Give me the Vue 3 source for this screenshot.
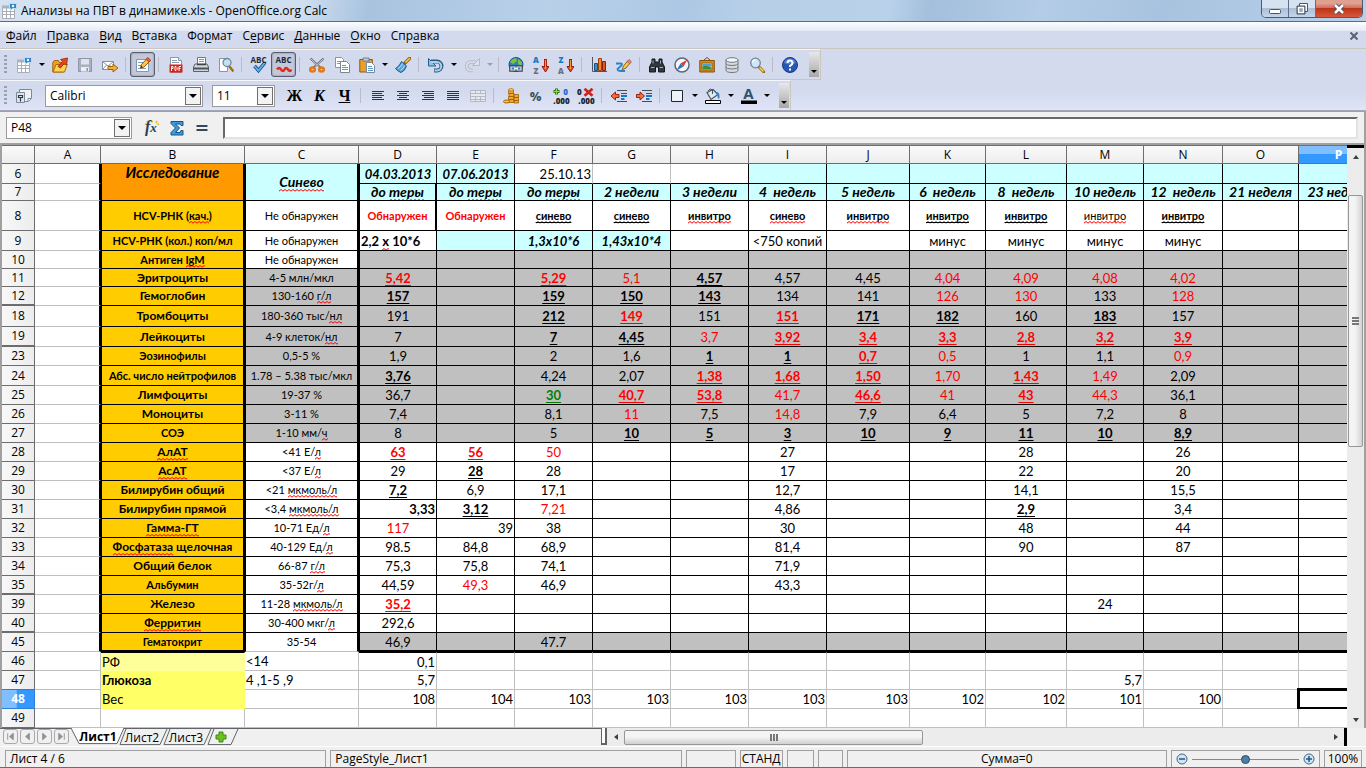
<script setup>
import { ref } from 'vue'

const menus = [
  ['', 'Ф', 'айл'], ['', 'П', 'равка'], ['', 'В', 'ид'], ['В', 'с', 'тавка'], ['Фо', 'р', 'мат'],
  ['С', 'е', 'рвис'], ['', 'Д', 'анные'], ['', 'О', 'кно'], ['Спр', 'а', 'вка'],
]

const lines = (xs) => xs.map(([a, b], i) => `<path d="M${a} ${3.5 + i * 2}H${b}" stroke="#2b3640"/>`).join('')
const lens = '<path d="M10 10l5 5" stroke="#9a6a12" stroke-width="3" stroke-linecap="round"/><path d="M10.500 10.500l4 4" stroke="#ffd35a" stroke-width="1.400"/><circle cx="6.500" cy="6" r="4.800" fill="#cfe6f7" stroke="#6f8699" stroke-width="1.300"/><path d="M3.500 5.500a3.200 3.200 0 0 1 3-2.500" stroke="#fff" fill="none" stroke-width="1.300"/>'
const arrowDown = '<path d="M12.500 2v9" stroke="#a3180c" stroke-width="3"/><path d="M9 9.500h7l-3.500 5.500z" fill="#e8502e" stroke="#a3180c"/><path d="M12.500 3v9" stroke="#f49a3c" stroke-width="1.200"/>'
const indentLines = '<path d="M6 2.500h10M10 5.500h6M6 13.500h10" stroke="#444c55"/><path d="M10 8h6M10 11h3.500" stroke="#1878c0" stroke-width="2"/>'

const icons = {
  doc: '<path d="M1.500 3.500h9v-0h3v12h-12z" fill="#fff" stroke="#a9adb5"/><path d="M1 5.500h13v-3h-13z" fill="#a8b4c4"/><path d="M2 8.500h12M2 11.500h12M5.500 3v12M9.500 3v12" stroke="#a9adb5"/><path d="M8.500.5h7v5h-4l-2 2v-2h-1z" fill="#2f86c8" stroke="#bcdcf2"/><circle cx="12" cy="3" r="1.200" fill="#fff"/>',
  open: '<path d="M.8 15V5.500l1.500-2h4l1.200 2h4V15z" fill="#eea023" stroke="#a0640a"/><path d="M1 15l3-7.500h11.300L12.500 15z" fill="#ffd44e" stroke="#a86a0a"/><path d="M6 9.500l4.500-5-2-2 7-1.500-1 7-2-2-4 5z" fill="#e64a25" stroke="#9c1c0c" stroke-width=".8"/>',
  save: '<path d="M1.500 1.500h13v13h-13z" fill="#a9b0bf" stroke="#8d95a6"/><path d="M4 2h8v5.500H4z" fill="#dfe3ec"/><path d="M4 10h8v4.500H4z" fill="#eceef4"/><path d="M9.500 11h1.500v3H9.500z" fill="#8d95a6"/>',
  mail: '<path d="M.5 4.500h11v8H.5z" fill="#fff" stroke="#8793a1"/><path d="M.5 4.500l5.500 4.500 5.500-4.500M.5 12.500l4-4.500M11.500 12.500l-4-4.500" fill="none" stroke="#8793a1"/><path d="M6 9.500h5v-2.500l5 4-5 4v-2.500H6z" fill="#f6ae35" stroke="#98650f"/>',
  edit: '<path d="M1.500 2.500h12v12h-12z" fill="#fff" stroke="#7f99b2"/><path d="M3 5.500h6M3 8.500h4M3 11.500h8" stroke="#7f9dbb"/><path d="M5.500 11l1-3.500 6-6.500 3 2.500-6.500 6.500z" fill="#fbc944" stroke="#965a10"/><path d="M11 2.500l3 2.500 1.800-1.800-3-2.700z" fill="#e4624b" stroke="#9b3222" stroke-width=".7"/><path d="M5.500 11l.8-2.200 1.500 1.400z" fill="#222"/>',
  pdf: '<path d="M2.500.5h8l3 3v12h-11z" fill="#fff" stroke="#8d99a6"/><path d="M10.500.5v3h3" fill="#dbe5ee" stroke="#8d99a6"/><path d="M4 3.500h5M4 5.500h7" stroke="#8aa0b5"/><path d="M1.500 7.500h13v8h-13z" fill="#d91f1a"/><path d="M3.500 14V9.500h1.500v2H3.500M7 9.500v4h1l1-1v-2l-1-1zM11 14V9.500h2M11 11.500h1.500" fill="none" stroke="#fff"/>',
  print: '<path d="M4.500.5h8v7h-8z" fill="#fff" stroke="#6b7884"/><path d="M6 2.500h5M6 4.500h5" stroke="#6a99c4"/><path d="M2 7h12l1.500 3v4.500H.5V10z" fill="#d4d6d8" stroke="#59626b"/><path d="M.5 10.500h15v2H.5z" fill="#4b545d"/><path d="M4 7.500h9" stroke="#3b444c" stroke-width="1.500"/>',
  preview: '<path d="M1.500 1.500h8v13h-8z" fill="#fff" stroke="#8a96a3"/><path d="M11 9l4.500 5.500" stroke="#a36d10" stroke-width="2.500"/><circle cx="9" cy="5.500" r="4" fill="#c3e0f4" stroke="#71879a" stroke-width="1.300"/>',
  spell: '<path d="M3.500 9l4 4.500 6.500-8" fill="none" stroke="#0f4d86" stroke-width="3.500"/><path d="M3.500 9l4 4.500 6.500-8" fill="none" stroke="#61b5ec" stroke-width="1.800"/>',
  auto: '<path d="M1 12.500q2-3 4 0t3.500 0 3.500 0 3 0" fill="none" stroke="#e22a1c" stroke-width="2.500"/>',
  cut: '<path d="M1.500 1.500l11 10M14.500 1.500l-11 10" stroke="#6a6f75" stroke-width="2.200"/><path d="M2 2l8 7.500M14 2l-8 7.500" stroke="#d9dcdf" stroke-width=".8"/><ellipse cx="3.500" cy="12.500" rx="2.300" ry="2" fill="none" stroke="#e37817" stroke-width="2.500"/><ellipse cx="12.500" cy="12.500" rx="2.300" ry="2" fill="none" stroke="#e37817" stroke-width="2.500"/>',
  copy: '<path d="M1.500.5h6l2 2v8h-8z" fill="#fff" stroke="#8795a3"/><path d="M3 4.500h5M3 6.500h5" stroke="#6a9fca"/><path d="M6.500 4.500h6l3 3v8h-9z" fill="#fff" stroke="#788796"/><path d="M8 8.500h4M8 10.500h6M8 12.500h6" stroke="#5f98c7"/>',
  paste: '<path d="M.8 2.500h12.500V15H.8z" fill="#e9a02b" stroke="#8e5a0b"/><path d="M4 1h6v3H4z" fill="#c5cbd1" stroke="#66707a" stroke-width=".8"/><path d="M7.500 5.500h5l3 3v7h-8z" fill="#fff" stroke="#7b8a99"/><path d="M9 9.500h4M9 11.500h5M9 13.500h5" stroke="#5f98c7"/>',
  brush: '<path d="M10 6l5-5" stroke="#9a640d" stroke-width="3.400" stroke-linecap="round"/><path d="M10.500 5.500l4.300-4.300" stroke="#f9c957" stroke-width="1.600"/><path d="M6.500 4.500l5 4.500q-1.500 5-5.500 6.500Q3 14.500.5 11.500q4-2 6-7z" fill="#58a5dd" stroke="#20588c"/><path d="M3 11.500q3-1.500 4.500-5M5.500 13.500q3-2 4-5" stroke="#b9dcf5" fill="none"/>',
  undo: '<path d="M3 4.500h6a4.500 4.500 0 0 1 0 9H6" fill="none" stroke="#285c86" stroke-width="4"/><path d="M.5 1.500v7.500h7.500z" fill="#8fc3e2" stroke="#285c86"/><path d="M3 5h6a4 4 0 0 1 0 8.500H6.500" fill="none" stroke="#a9d3ea" stroke-width="2"/>',
  redo: '<path d="M12.500 5h-6a4.300 4.300 0 0 0 0 8.500H9" fill="none" stroke="#b4b9c6" stroke-width="3.500"/><path d="M12.500 5h-6a4.300 4.300 0 0 0 0 8.500H9" fill="none" stroke="#dee1eb" stroke-width="1.600"/><path d="M15.500 1.500v7H8.500z" fill="#dee1eb" stroke="#b4b9c6"/>',
  link: '<circle cx="8" cy="7.500" r="7" fill="#2e7fc1" stroke="#1d527f"/><path d="M2 5q2-3.500 6-4l1 3-4 3zM10 2l4 3v4l-4-2z" fill="#7cc142"/><path d="M2.500 9.500h5v4h-5zM8.500 9.500h5v4h-5z" fill="none" stroke="#38444f" stroke-width="2.600"/><path d="M3 10h4v3H3zM9 10h4v3H9zM6 11.500h4" fill="none" stroke="#eef1f3" stroke-width="1.200"/>',
  sortAZ: arrowDown, sortZA: arrowDown,
  chart: '<path d="M1.500 0v14.500H16" fill="none" stroke="#4d5660"/><path d="M3.500 6.500h3v7h-3z" fill="#3d8fd0" stroke="#1a4f80"/><path d="M7.500 1.500h3v12h-3z" fill="#f08a24" stroke="#a04208"/><path d="M11.500 4.500h3v9h-3z" fill="#e2532a" stroke="#8d2009"/>',
  draw: '<path d="M0 6.500h4.500q2.500 0 1 2L1.500 12q0 2 3.500 2h4" fill="none" stroke="#2384d0" stroke-width="1.800"/><path d="M6 13l1.500-4L12 3.500l2.500 2L10 11z" fill="#fbc944" stroke="#9a6010"/><path d="M11 4.500l2.500 2.300 2-2-2.500-2.300z" fill="#e78d80" stroke="#a04a3a" stroke-width=".7"/>',
  find: '<path d="M3 2h3v3h4V2h3v3l2.500 5v5h-6v-5h-3v5h-6v-5L3 5z" fill="#30373d" stroke="#14181b"/><path d="M2 10.500h3.500M10.500 10.500H14M4 3.500v3M11.500 3.500v3" stroke="#a9b2ba"/>',
  nav: '<circle cx="8" cy="8" r="7" fill="#f5f8fb" stroke="#5b6875" stroke-width="1.500"/><path d="M13.500 2.500L9.500 9.500 6.500 6.500z" fill="#e3392c"/><path d="M2.500 13.500L6.500 6.500l3 3z" fill="#2c72c4"/>',
  gallery: '<path d="M5 3L8 .5 11 3" fill="none" stroke="#6b4a18"/><path d="M.8 3.500h14.500v11.500H.8z" fill="#d98a1d" stroke="#874f08"/><path d="M3 6h10v7H3z" fill="#fde9a8" stroke="#874f08" stroke-width=".7"/><path d="M3.500 6.500h9v3h-9z" fill="#4aa3de"/><path d="M3.500 9.500q4-2 9 1v2h-9z" fill="#3f8d3a"/>',
  db: '<path d="M2 3v10q0 2.500 6 2.500t6-2.500V3z" fill="#d6dadd" stroke="#6f7880"/><ellipse cx="8" cy="3" rx="6" ry="2.300" fill="#f5f6f7" stroke="#6f7880"/><path d="M2 6.500q0 2 6 2t6-2M2 10q0 2 6 2t6-2" fill="none" stroke="#6f7880"/>',
  zoom: lens,
  help: '<circle cx="8" cy="8" r="7.500" fill="#2757b4" stroke="#183a80"/><path d="M2 6a6.300 6.300 0 0 1 12 0q-6 3-12 0z" fill="#6f97dd" opacity=".6"/><path d="M5.500 6q0-2.500 2.500-2.500T10.500 6q0 1.500-2.500 3v1" fill="none" stroke="#fff" stroke-width="2"/><path d="M7 11.500h2v2H7z" fill="#fff"/>',
  styles: '<path d="M3.500 1.500h12v9l-3 3h-9z" fill="#eef1f6" stroke="#7d8998"/><path d="M15 10.500h-3v3" fill="#fff" stroke="#7d8998"/><path d="M.5 4.500h8v10h-8z" fill="#dfe4ec" stroke="#7d8998"/><path d="M2.500 7.500h4v2h-4zM4.500 9.500v4" fill="none" stroke="#303b47" stroke-width="1.200"/>',
  left: lines([[2, 14], [2, 12], [2, 14], [2, 12], [2, 14]]),
  center: lines([[2, 14], [4, 12], [2, 14], [4, 12], [2, 14]]),
  right: lines([[2, 14], [4, 14], [2, 14], [4, 14], [2, 14]]),
  justify: lines([[2, 14], [2, 14], [2, 14], [2, 14], [2, 14]]),
  merge: '<path d="M.5 2.500h15v11H.5zM.5 5.500h15M.5 8.500h15M.5 11.500h15M5.500 2.500v3M10.500 2.500v3M5.500 8.500v5M10.500 8.500v5" fill="#e7e9f0" stroke="#b4b8c4"/>',
  money: '<path d="M5.500 2.500h5v3h-5zM6 5.500h5v3H6zM5.500 8.500h5v3h-5zM6 11.500h5v3H6zM11 6.500h4.500v3H11zM11 9.500h4.500v3H11zM11 12.500h4.500v2.500H11z" fill="#f3a92d" stroke="#a15f0a" stroke-width=".8"/><ellipse cx="8" cy="1.800" rx="2.500" ry="1.200" fill="#ffd970" stroke="#a15f0a" stroke-width=".7"/><ellipse cx="3.500" cy="13.500" rx="3" ry="1.500" fill="#f9bf4c" stroke="#a15f0a"/>',
  addDec: '<path d="M3.500 .5v6M.5 3.500h6" stroke="#2b7a10" stroke-width="3"/><path d="M3.500 1v5M1 3.500h5" stroke="#8ddd4c" stroke-width="1.200"/>',
  delDec: '<path d="M6.500 .8l8 7M14.500 .8l-8 7" stroke="#d4201a" stroke-width="2.800"/>',
  outdent: indentLines + '<path d="M0 8l4.500-4v2.500H8v3H4.500V12z" fill="#f07040" stroke="#98200c"/>',
  indent: indentLines + '<path d="M8.500 8L4 4v2.500H.5v3H4V12z" fill="#f07040" stroke="#98200c"/>',
  border: '<path d="M2.500 2.500h11v11h-11z" fill="#edf1f8" stroke="#20272e"/>',
  fill: '<path d="M2 4.500l6-3 5 5-7 5z" fill="#dfe7ee" stroke="#47535e" stroke-width="1.200"/><path d="M3 3q2-3.500 4.500-1v4" fill="none" stroke="#47535e"/><path d="M11 4q4-1 3.500 6-.5 1.500-1.500 0l-1-3z" fill="#2f87c9"/><path d="M.5 12.500h15v3H.5z" fill="#fff" stroke="#000"/>',
  color: '<path d="M0 12.500h16v3.500H0z" fill="#000"/>',
  fx: '<path d="M3 1l1 2M8 .5v2M13 1l-1 2M1 4l2 .5M15 4l-2 .5" stroke="#f4bc20" stroke-width="1.800"/>',
  sum: '<path d="M2 1.500h12v4h-2l-1-1.500H6.500l4 4-4 4.500H11l1-2h2v4.500H2v-2.500l4.500-4.500L2 3.500z" fill="#3f9ad8" stroke="#15548a"/>',
  eq: '<path d="M2.500 6h11M2.500 10h11" stroke="#33485c" stroke-width="2"/>',
}

const B = (icon, label, extra = {}) => ({ icon, label, ...extra })
const sep = { sep: true }
const bar1 = [
  B('doc', 'Создать', { menu: true }), B('open', 'Открыть'), B('save', 'Сохранить'), B('mail', 'Письмо'), sep,
  B('edit', 'Правка файла', { on: true }), sep, B('pdf', 'Экспорт в PDF'), B('print', 'Печать'), B('preview', 'Просмотр'), sep,
  B('spell', 'Орфография', { abc: true }), B('auto', 'Автопроверка', { abc: true, on: true }), sep,
  B('cut', 'Вырезать'), B('copy', 'Копировать'), B('paste', 'Вставить', { menu: true }), B('brush', 'Кисть'), sep,
  B('undo', 'Отменить', { menu: true }), B('redo', 'Вернуть', { menu: true, dim: true }), sep,
  B('link', 'Гиперссылка'), B('sortAZ', 'По возрастанию', { letters: ['A', 'Z'] }), B('sortZA', 'По убыванию', { letters: ['Z', 'A'] }), sep,
  B('chart', 'Диаграмма'), B('draw', 'Рисование'), sep,
  B('find', 'Найти'), B('nav', 'Навигатор'), B('gallery', 'Галерея'), B('db', 'Источники'), B('zoom', 'Масштаб'), sep, B('help', 'Помощь'),
]
const bar2 = [
  B('', 'Полужирный', { text: 'Ж' }), B('', 'Курсив', { text: 'К', tcls: 'it' }), B('', 'Подчёркнутый', { text: 'Ч', tcls: 'ul' }), sep,
  B('left', 'Влево'), B('center', 'По центру'), B('right', 'Вправо'), B('justify', 'По ширине'), B('merge', 'Объединить'), sep,
  B('money', 'Валюта'), B('', 'Процент', { text: '%', tcls: 'pct' }), B('addDec', 'Добавить разряд', { dec: '0' }), B('delDec', 'Удалить разряд', { dec: '' }), sep,
  B('outdent', 'Уменьшить отступ'), B('indent', 'Увеличить отступ'), sep,
  B('border', 'Обрамление', { menu: true }), B('fill', 'Цвет фона', { menu: true }), B('color', 'Цвет шрифта', { menu: true, bigA: true }),
]

const cols = [
  ['A', 66], ['B', 144], ['C', 114], ['D', 78], ['E', 78], ['F', 78], ['G', 78], ['H', 78], ['I', 78],
  ['J', 83], ['K', 76], ['L', 81], ['M', 77], ['N', 79], ['O', 76], ['P', 80],
]
const letters = 'DEFGHIJKLMNOP'.split('')

// Cell notation: "text|flags"; b bold, i italic, u underline, r red, g green, R right, L left, s small, c cyan.
// Words between tildes are marked by the spell checker.
const raw = [
  [6, 20, '', '', ['04.03.2013|bic', '07.06.2013|bic', '25.10.13|R', '', '', '|c', '|c', '|c', '|c', '|c', '|c', '|c', '|c']],
  [7, 17, '', '', ['до ~теры~', 'до ~теры~', 'до ~теры~', '2 недели', '3 недели', '4  недель', '5 недель', '6  недель', '8  недель', '10 недель', '12  недель', '21 неделя', '23 недель'].map((t) => t + '|bich')],
  [8, 30, 'HCV-РНК (~кач.~)', 'Не обнаружен', ['Обнаружен|brs', 'Обнаружен|brs', '~синево~|bus', '~синево~|bus', '~инвитро~|bs', '~синево~|bs', '~инвитро~|bs', '~инвитро~|bus', '~инвитро~|bus', '~инвитро~|s', '~инвитро~|bus']],
  [9, 20, 'HCV-РНК (кол.) коп/мл', 'Не обнаружен', ['2,2 ~х~ 10*6|bL', '|c', '1,3х10*6|bic', '1,43х10*4|bic', '', '<750 копий', '', 'минус', 'минус', 'минус', 'минус']],
  [10, 18, 'Антиген ~IgM~', 'Не обнаружен', []],
  [11, 18, 'Эритроциты', '4-5 млн/мкл', ['5,42|bru', '', '5,29|bru', '5,1|r', '4,57|bu', '4,57', '4,45', '4,04|r', '4,09|r', '4,08|r', '4,02|r']],
  [12, 19, 'Гемоглобин', '130-160 ~г/л~', ['157|bu', '', '159|bu', '150|bu', '143|bu', '134', '141', '126|r', '130|r', '133', '128|r']],
  [18, 21, 'Тромбоциты', '180-360 тыс/~нл~', ['191', '', '212|bu', '149|bru', '151', '151|bru', '171|bu', '182|bu', '160', '183|bu', '157']],
  [19, 20, 'Лейкоциты', '4-9 клеток/~нл~', ['7', '', '7|bu', '4,45|bu', '3,7|r', '3,92|bru', '3,4|bru', '3,3|bru', '2,8|bru', '3,2|bru', '3,9|bru']],
  [23, 19, 'Эозинофилы', '0,5-5 %', ['1,9', '', '2', '1,6', '1|bu', '1|bu', '0,7|bru', '0,5|r', '1', '1,1', '0,9|r']],
  [24, 20, 'Абс. число нейтрофилов', '1.78 – 5.38 тыс/мкл', ['3,76|bu', '', '4,24', '2,07', '1,38|bru', '1,68|bru', '1,50|bru', '1,70|r', '1,43|bru', '1,49|r', '2,09']],
  [25, 19, 'Лимфоциты', '19-37 %', ['36,7', '', '30|bgu', '40,7|bru', '53,8|bru', '41,7|r', '46,6|bru', '41|r', '43|bru', '44,3|r', '36,1']],
  [26, 19, 'Моноциты', '3-11 %', ['7,4', '', '8,1', '11|r', '7,5', '14,8|r', '7,9', '6,4', '5', '7,2', '8']],
  [27, 19, 'СОЭ', '1-10 мм/~ч~', ['8', '', '5', '10|bu', '5|bu', '3|bu', '10|bu', '9|bu', '11|bu', '10|bu', '8,9|bu']],
  [28, 19, '~АлАТ~', '<41 Е/~л~', ['63|bru', '56|bru', '50|r', '', '', '27', '', '', '28', '', '26']],
  [29, 19, '~АсАТ~', '<37 Е/~л~', ['29', '28|bu', '28', '', '', '17', '', '', '22', '', '20']],
  [30, 19, 'Билирубин общий', '<21 ~мкмоль/л~', ['7,2|bu', '6,9', '17,1', '', '', '12,7', '', '', '14,1', '', '15,5']],
  [31, 19, 'Билирубин прямой', '<3,4 ~мкмоль/л~', ['3,33|bR', '3,12|bu', '7,21|r', '', '', '4,86', '', '', '2,9|bu', '', '3,4']],
  [32, 19, '~Гамма-ГТ~', '10-71 Ед/~л~', ['117|r', '39|R', '38', '', '', '30', '', '', '48', '', '44']],
  [33, 19, '~Фосфатаза~ щелочная', '40-129 Ед/~л~', ['98.5', '84,8', '68,9', '', '', '81,4', '', '', '90', '', '87']],
  [34, 19, 'Общий белок', '66-87 ~г/л~', ['75,3', '75,8', '74,1', '', '', '71,9']],
  [35, 19, 'Альбумин', '35-52г/~л~', ['44,59', '49,3|r', '46,9', '', '', '43,3']],
  [39, 19, 'Железо', '11-28 ~мкмоль/л~', ['35,2|bru', '', '', '', '', '', '', '', '', '24']],
  [40, 19, '~Ферритин~', '30-400 мкг/~л~', ['292,6']],
  [45, 19, 'Гематокрит', '35-54', ['46,9', '', '47.7']],
  [46, 19, 'РФ', '<14', ['0,1|R']],
  [47, 19, 'Глюкоза', '4 ,1-5 ,9', ['5,7|R', '', '', '', '', '', '', '', '', '5,7|R']],
  [48, 19, 'Вес', '', ['108', '104', '103', '103', '103', '103', '103', '102', '102', '101', '100'].map((t) => t + '|R')],
  [49, 19, '', '', []],
]

const names = { b: 'bold', i: 'ital', u: 'under', r: 'red', g: 'green', R: 'end', L: 'start', s: 'small', c: 'cyan', h: 'week' }
const split = (t) => t.split('~').map((s, i) => ({ s, bad: i % 2 === 1 })).filter((p) => p.s)
const rows = raw.map(([n, h, b, c, cells]) => ({
  n, h, b: split(b), c: split(c),
  grey: (n >= 10 && n <= 27) || n === 45,
  inside: n <= 45,
  skip: [12, 19, 35, 40].includes(n),
  tight: [8, 9, 10, 23, 24, 27, 35, 45].includes(n),
  cells: letters.map((l, i) => {
    const [t, f = ''] = (cells[i] || '').split('|')
    const cls = [...f].map((k) => names[k])
    if (n === 6 && (l === 'F' || l === 'G')) cls.push('pale')
    if (l === 'D' && n <= 45) cls.push('edge-l')
    if (l === 'D' && (n === 7 || n === 8)) cls.push('thick-r')
    return { l, parts: split(t), cls }
  }),
}))

const sizes = ref('11')
const font = ref('Calibri')
const cell = ref('P48')
const formula = ref('')
const zoomLevel = ref(50)
</script>

<template>
  <div class="window">
    <header class="title">
      <svg class="appicon" viewBox="0 0 16 16" v-html="icons.doc"></svg>
      <h1>Анализы на ПВТ в динамике.xls - OpenOffice.org Calc</h1>
      <div class="winbtns">
        <button aria-label="Свернуть"><svg viewBox="0 0 14 12"><rect x="1.500" y="6.500" width="11" height="4" rx="1" fill="#fff" stroke="#4b5568" /></svg></button>
        <button aria-label="Развернуть"><svg viewBox="0 0 14 12"><path d="M4.500.5h8v8h-8z" fill="#fff" stroke="#4b5568" /><path d="M2 3h8v8H2z" fill="#4b5568" stroke="#4b5568" /><path d="M3.500 4.500h5v5h-5z" fill="#8fa3bb" stroke="#fff" stroke-width="1.500" /></svg></button>
        <button class="close" aria-label="Закрыть"><svg viewBox="0 0 14 12"><path d="M3 2l8 8M11 2l-8 8" stroke="#4b4a5c" stroke-width="4.500" /><path d="M3 2l8 8M11 2l-8 8" stroke="#fff" stroke-width="2.500" /></svg></button>
      </div>
    </header>

    <nav class="menu">
      <button v-for="m in menus" :key="m.join('')"><span>{{ m[0] }}<u>{{ m[1] }}</u>{{ m[2] }}</span></button>
      <button class="docclose" aria-label="Закрыть документ"><svg viewBox="0 0 10 10"><path d="M1.500 1.500l7 7M8.500 1.500l-7 7" stroke="#59616e" stroke-width="2" /></svg></button>
    </nav>

    <div class="bars">
      <div v-for="(bar, bi) in [bar1, bar2]" :key="bi" class="bar">
        <span class="grip"></span>
        <template v-if="bi === 1">
          <button class="tool" aria-label="Стили"><svg viewBox="0 0 16 16" v-html="icons.styles"></svg></button>
          <div class="combo fontbox">
            <select v-model="font" aria-label="Шрифт"><option>Calibri</option></select><span class="drop"><i class="tri"></i></span>
          </div>
          <div class="combo sizebox">
            <select v-model="sizes" aria-label="Кегль"><option>11</option></select><span class="drop"><i class="tri"></i></span>
          </div>
        </template>
        <template v-for="(t, i) in bar" :key="i">
          <span v-if="t.sep" class="sep"></span>
          <template v-else>
            <button class="tool" :class="{ on: t.on }" :aria-label="t.label">
              <span v-if="t.text" class="glyph" :class="t.tcls">{{ t.text }}</span>
              <svg v-else viewBox="0 0 16 16" v-html="icons[t.icon]"></svg>
              <span v-if="t.abc" class="abc">ABC</span>
              <span v-if="t.letters" class="az"><b>{{ t.letters[0] }}</b><b>{{ t.letters[1] }}</b></span>
              <span v-if="t.dec !== undefined" class="dec"><b :class="{ lead: !t.dec }">0</b><b>.000</b></span>
              <span v-if="t.bigA" class="biga">A</span>
            </button>
            <button v-if="t.menu" class="more" :class="{ dim: t.dim }" :aria-label="t.label + ', список'"><i class="tri"></i></button>
          </template>
        </template>
        <button class="over" aria-label="Ещё"><i class="tri"></i></button>
      </div>
    </div>

    <div class="formula">
      <div class="combo namebox">
        <input v-model="cell" aria-label="Имя ячейки" /><button class="drop" aria-label="Список имён"><i class="tri"></i></button>
      </div>
      <button class="tool" aria-label="Мастер функций"><svg viewBox="0 0 16 16" v-html="icons.fx"></svg><span class="fx">f<small>x</small></span></button>
      <button class="tool" aria-label="Сумма"><svg viewBox="0 0 16 16" v-html="icons.sum"></svg></button>
      <button class="tool" aria-label="Функция"><svg viewBox="0 0 16 16" v-html="icons.eq"></svg></button>
      <input v-model="formula" class="line" aria-label="Строка ввода" />
    </div>

    <main class="work">
      <div class="grid">
        <table>
          <colgroup>
            <col class="w-n" />
            <col v-for="c in cols" :key="c[0]" :style="{ width: c[1] + 'px' }" />
          </colgroup>
          <thead>
            <tr>
              <th class="corner"></th>
              <th v-for="c in cols" :key="c[0]" scope="col" :class="{ sel: c[0] === 'P' }">{{ c[0] }}</th>
            </tr>
          </thead>
          <tbody>
            <tr v-for="r in rows" :key="r.n" :class="{ grey: r.grey, inside: r.inside, last: r.n === 45, after: r.n === 46, tight: r.tight }" :style="{ height: r.h + 'px' }">
              <th scope="row" :class="{ sel: r.n === 48, skip: r.skip }">{{ r.n }}</th>
              <td class="a"></td>
              <td v-if="r.n === 6" class="b head" rowspan="2">Исследование</td>
              <td v-else-if="r.n !== 7" class="b" :class="'b' + r.n"><span v-for="(p, i) in r.b" :key="i" :class="{ bad: p.bad }">{{ p.s }}</span></td>
              <td v-if="r.n === 6" class="c bold ital cyan" rowspan="2"><span class="bad">Синево</span></td>
              <td v-else-if="r.n !== 7" class="c" :class="{ white: r.n === 10 || r.n === 45 }"><span v-for="(p, i) in r.c" :key="i" :class="{ bad: p.bad }">{{ p.s }}</span></td>
              <td v-for="d in r.cells" :key="d.l" :class="d.cls">
                <span class="val"><span v-for="(p, i) in d.parts" :key="i" :class="{ bad: p.bad }">{{ p.s }}</span></span>
                <span v-if="r.n === 48 && d.l === 'P'" class="cursor"></span>
              </td>
            </tr>
          </tbody>
        </table>
      </div>
      <div class="vscroll">
        <span class="stub"></span>
        <button aria-label="Вверх"><i class="up"></i></button>
        <div class="vtrack"><div class="vthumb"><i></i><i></i><i></i></div></div>
        <button aria-label="Вниз"><i class="down"></i></button>
      </div>
    </main>

    <div class="tabs">
      <div class="tabside">
        <button v-for="(p, i) in ['M4 3v7M10 3L6 6.500l4 3.500z', 'M9 3L5 6.500 9 10z', 'M5 3l4 3.500L5 10z', 'M4 3l4 3.500L4 10zM10 3v7']" :key="i" class="navbtn" :aria-label="'Листы ' + (i + 1)">
          <svg viewBox="0 0 14 14"><path :d="p" fill="#8f9399" stroke="#8f9399" /></svg>
        </button>
        <button v-for="(s, i) in ['Лист1', 'Лист2', 'Лист3']" :key="s" class="tab" :class="{ active: i === 0 }">
          <svg viewBox="0 0 54 18" preserveAspectRatio="none"><path :d="i ? 'M11 0L5 16.500H45L52 0' : 'M0 0L8 16.500H46L53 0'" :fill="i ? '#f0f0f0' : '#fff'" stroke="#606468" vector-effect="non-scaling-stroke" /></svg>
          <span>{{ s }}</span>
        </button>
        <button class="tab add" aria-label="Добавить лист">
          <svg viewBox="0 0 38 18" preserveAspectRatio="none"><path d="M11 0L5 16.500H28L35 0" fill="#f0f0f0" stroke="#606468" vector-effect="non-scaling-stroke" /></svg>
          <svg class="plus" viewBox="0 0 12 12"><path d="M4 1h4v3h3v4H8v3H4V8H1V4h3z" fill="#6cc024" stroke="#3d8a10" /></svg>
        </button>
      </div>
      <div class="splitter"></div>
      <div class="hscroll">
        <button aria-label="Влево"><i class="lt"></i></button>
        <div class="htrack"><div class="hthumb"><i></i><i></i><i></i></div></div>
        <button aria-label="Вправо"><i class="rt"></i></button>
        <span class="hstub"></span>
      </div>
    </div>

    <footer class="status">
      <span class="s1">Лист 4 / 6</span>
      <span class="s2">PageStyle_Лист1</span>
      <span class="s3"></span>
      <span class="s4">СТАНД</span>
      <span class="s5"></span>
      <span class="s6"></span>
      <span class="s7">Сумма=0</span>
      <span class="s8">
        <button aria-label="Мельче"><svg viewBox="0 0 12 12"><circle cx="6" cy="6" r="5" fill="#cfe4f5" stroke="#4b6780" /><path d="M3 6h6" stroke="#1e5788" stroke-width="1.500" /></svg></button>
        <input v-model="zoomLevel" type="range" aria-label="Масштаб" />
        <button aria-label="Крупнее"><svg viewBox="0 0 12 12"><circle cx="6" cy="6" r="5" fill="#cfe4f5" stroke="#4b6780" /><path d="M3 6h6M6 3v6" stroke="#1e5788" stroke-width="1.500" /></svg></button>
      </span>
      <span class="s9">100%</span>
    </footer>
  </div>
</template>

<style>
html, body { margin: 0; background: #f0f0f0; overflow: hidden; }
</style>

<style scoped>
* { box-sizing: border-box; }
.window { height: 100vh; display: flex; flex-direction: column; background: #f0f0f0; color: #000; font: 12px/16px "Open Sans", "Noto Sans", sans-serif; overflow: hidden; border-bottom: 1px solid #5b7087; }
button { border: 0; background: none; padding: 0; margin: 0; font: inherit; color: inherit; display: flex; align-items: center; justify-content: center; }
input, select { font: inherit; color: inherit; border: 0; margin: 0; padding: 0; border-radius: 0; outline: 0; }
svg { display: block; }

.title { flex: none; height: 22px; display: flex; align-items: center; border-bottom: 1px solid #5a6c80; background: linear-gradient(100deg, #d5e2f2 0, #d0dff0 22%, #a9c3df 27%, #b9d0e9 40%, #adc8e4 50%, #b8cfe8 55%, #bad1ea 65%, #a3bfdc 68%, #b4cce6 76%, #a8c3df 85%, #b9d0ea 100%); }
.appicon { width: 16px; height: 16px; margin: 0 4px 0 1px; }
.title h1 { margin: 0; font-size: 12px; font-weight: 400; flex: 1; white-space: nowrap; }
.winbtns { align-self: flex-start; display: flex; height: 18px; margin-right: 3px; border: 1px solid #4a5a6e; border-top: 0; border-radius: 0 0 5px 5px; overflow: hidden; }
.winbtns button { width: 27px; background: linear-gradient(#d6e2f0 0 45%, #a9bdd5 46%, #c4d6ea); border-right: 1px solid #5d6f86; }
.winbtns svg { width: 14px; height: 12px; }
.winbtns .close { width: 46px; border: 0; background: linear-gradient(#e0a090 0 20%, #d07060 45%, #b93216 46%, #d8573a); }

.menu { flex: none; height: 27px; display: flex; align-items: center; gap: 10px; padding: 2px 7px 0 6px; background: linear-gradient(#fcfdff 0, #e4eaf6 9px, #d4daee 9px); border-bottom: 1px solid #c9c6bf; }
.menu u { text-underline-offset: 2px; }
.docclose { margin-left: auto; }
.docclose svg { width: 10px; height: 10px; }

.bars { flex: none; background: linear-gradient(#d4daee 70%, #dfe5f6); border-bottom: 1px solid #a5a8b8; }
.bar { width: fit-content; height: 31px; display: flex; align-items: center; border-right: 1px solid #c9c6bf; border-bottom: 1px solid #c9c6bf; border-top: 1px solid #f4f6fc; }
.bar + .bar { height: 30px; border-bottom: 0; }
.grip { width: 3px; height: 20px; margin: 0 4px; background: repeating-linear-gradient(#9aa0b0 0 2px, transparent 2px 4px); }
.tool { position: relative; width: 25px; height: 25px; flex: none; border: 1px solid transparent; border-radius: 3px; }
.tool > svg { width: 16px; height: 16px; }
.tool.on { border-color: #565d6c; background: #c3c9da; box-shadow: inset 0 0 2px #707789; }
.sep { width: 2px; height: 15px; margin: 0 3px; border-left: 1px solid #b9bcc8; }
.more { width: 11px; height: 25px; }
.tri { border: 3px solid transparent; border-top-color: #000; border-bottom: 0; }
.dim .tri { border-top-color: #9a9fae; }
.over { width: 10px; height: 25px; align-items: flex-end; margin: 0 1px 0 7px; padding-bottom: 4px; background: linear-gradient(#e8e8e8, #a8a8a8); }
.glyph { font: bold 16px/20px "Liberation Serif", serif; }
.glyph.it { font-style: italic; }
.glyph.ul { text-decoration: underline; }
.glyph.pct { font: bold 13px/20px "Open Sans", sans-serif; color: #3a4a5a; }
.abc { position: absolute; left: 0; right: 0; top: 2px; font: bold 8px/9px "Open Sans", sans-serif; color: #222c3a; text-align: center; }
.az { position: absolute; left: 4px; top: 1px; display: flex; flex-direction: column; font: bold 8px/11px "Open Sans", sans-serif; color: #1878c8; }
.az b:last-child { color: #6b7079; }
.dec { position: absolute; left: 3px; right: 1px; top: 3px; display: flex; flex-direction: column; align-items: center; font: bold 8px/9px "Open Sans", sans-serif; color: #20262d; }
.dec b:first-child { align-self: flex-end; margin-right: 3px; color: #2466d8; }
.dec b.lead { align-self: flex-start; color: #20262d; }
.biga { position: absolute; left: 0; right: 0; top: 1px; font: bold 15px/16px "Open Sans", sans-serif; color: #2c5374; text-align: center; }
.combo { display: flex; height: 22px; border: 1px solid #9a9a9a; background: #fff; padding: 1px; }
.combo select, .combo input { flex: 1; min-width: 0; appearance: none; background: #fff; padding: 0 3px; }
.drop { width: 16px; border: 1px solid #707070; background: #f3f3f3; display: flex; align-items: center; justify-content: center; pointer-events: none; }
.combo .tri { border-width: 4px 4px 0; }
.fontbox { width: 158px; margin: 0 9px; }
.sizebox { width: 63px; margin-right: 7px; }

.formula { flex: none; height: 34px; display: flex; align-items: center; padding: 0 6px; border: 1px solid #a0a0a0; border-width: 1px 2px 2px 0; background: #f0f0f0; }
.namebox { width: 126px; margin-right: 7px; }
.fx { position: absolute; left: 5px; top: 2px; font: italic bold 16px/18px "Liberation Serif", serif; color: #2b4055; }
.fx small { font-size: 13px; }
.line { flex: 1; height: 22px; margin-left: 9px; background: #fff; border: 2px solid #e3e3e3; border-top-color: #696969; border-left-color: #696969; padding: 0 4px; }

.work { flex: 1; min-height: 0; display: flex; border-right: 2px solid #a0a0a0; }
.grid { flex: 1; min-width: 0; overflow: hidden; border-left: 2px solid #a0a0a0; background: #fff; }
table { table-layout: fixed; width: 1369px; border-collapse: separate; border-spacing: 0; font: 13px/16px Lato, "Open Sans", sans-serif; }
.w-n { width: 33px; }
th { padding: 0; font: 12px/14px "Open Sans", sans-serif; border: solid #6d6d6d; border-width: 0 1px 1px 0; background: linear-gradient(90deg, #f8f8f8, #ececec); text-align: center; }
thead th { height: 19px; border-top: 1px solid #6d6d6d; background: linear-gradient(#fafafa, #ededed); }
th.skip { border-bottom-width: 2px; }
th.sel { color: #fff; font-weight: bold; background: linear-gradient(#80bfff 0 45%, #3399ff 46%); border-color: #2d7fd6; }
tbody th.sel { background: linear-gradient(90deg, #80bfff 0 45%, #3399ff 46%); }
td { position: relative; padding: 0 1px; border: solid #c0c0c0; border-width: 0 1px 1px 0; background: #fff; text-align: center; vertical-align: middle; white-space: pre; overflow: hidden; }
.inside td { border-color: #000; }
.inside td.a { border-color: #c0c0c0; border-right: 2px solid #000; }
.inside td.pale { border-right-color: #c0c0c0; }
td.b { background: #fc0; font-weight: bold; font-size: 12px; }
.tight td.b { font-size: 11px; }
.inside td.b { border-left: 1px solid #000; border-right-width: 2px; }
td.b.head { background: #f90; font-size: 15px; font-style: italic; vertical-align: top; }
td.c { font-size: 11px; }
.inside td.c { border-left: 1px solid #000; border-right-width: 2px; }
td.c.cyan { font-size: 14px; }
td.edge-l { border-left: 1px solid #000; }
td.thick-r { border-right: 2px solid #000; }
.grey td { background: #c0c0c0; }
.grey td.a, .grey td.white { background: #fff; }
.grey td.b { background: #fc0; }
.last td { border-bottom-width: 2px; }
.last td.a, .last td.c { border-bottom: 1px solid #c0c0c0; }
.bold { font-weight: bold; }
.ital { font-style: italic; }
.under .val { text-decoration: underline; text-underline-offset: 2px; }
.red { color: #f00; }
.green { color: #008000; }
td.end { text-align: right; }
td.start { text-align: left; }
td.small { font-size: 11px; }
td.week { font-size: 14px; }
td.cyan { background: #cff; }
.bad { padding-bottom: 2px; background: url("data:image/svg+xml,%3Csvg xmlns='http://www.w3.org/2000/svg' width='4' height='3'%3E%3Cpath d='M-1 3L2 .5L5 3' fill='none' stroke='%23f00'/%3E%3C/svg%3E") left bottom repeat-x; }
td.b46, td.b47, td.b48 { text-align: left; font-size: 13px; font-weight: 400; background: #ff9; border-color: #ff9; }
td.b47, td.b48 { background: #ff6; border-color: #ff6; }
td.b47 { font-weight: bold; }
td.b49 { background: #fff; }
.after td:nth-child(n+5), .after td.b { border-top: 1px solid #000; }
.after td.c, .after ~ tr td.c { text-align: left; font-size: 13px; }
tr:has(.cursor) td:last-child { overflow: visible; }
.cursor { position: absolute; inset: -2px; border: 3px solid #000; }

.vscroll { flex: none; width: 17px; display: flex; flex-direction: column; background: #ececec; }
.stub { height: 3px; background: #000; }
.vscroll button { height: 17px; }
.vtrack { flex: 1; padding-top: 30px; }
.vthumb { height: 252px; margin: 0 1px; border: 1px solid #979797; border-radius: 2px; background: linear-gradient(90deg, #f4f4f4 45%, #d2d2d2); display: flex; flex-direction: column; align-items: center; justify-content: center; gap: 1px; }
.vthumb i { width: 7px; height: 2px; background: #777; }
.up, .down { border: 3px solid transparent; border-bottom: 4px solid #404040; border-top: 0; }
.down { border-top: 4px solid #404040; border-bottom: 0; }

.tabs { flex: none; height: 18px; display: flex; }
.tabside { flex: 0 1 601px; display: flex; align-items: flex-start; padding: 0 0 0 3px; border-top: 1px solid #606468; }
.navbtn { width: 15px; height: 15px; margin: 0 2px 0 0; border: 1px solid #a9a9a9; border-radius: 3px; }
.navbtn svg { width: 14px; height: 14px; }
.tab { position: relative; width: 54px; height: 17px; margin-right: -10px; flex: none; }
.tab svg { position: absolute; inset: 0; width: 100%; height: 100%; }
.tab span { position: relative; font-size: 12px; line-height: 16px; }
.tab.active { font-weight: bold; z-index: 1; margin-top: -1px; height: 17px; }
.tab.add { width: 38px; }
.tab svg.plus { left: 12px; top: 2px; width: 12px; height: 12px; }
.splitter { width: 6px; margin: 0 0 1px; border: 2px solid #606468; border-width: 0 2px 2px 1px; background: #fff; }
.hscroll { flex: 1; display: flex; margin-right: 19px; background: #ececec; }
.hscroll button { width: 17px; }
.htrack { flex: 1; display: flex; align-items: center; }
.hthumb { width: 299px; height: 15px; border: 1px solid #979797; border-radius: 2px; background: linear-gradient(#f4f4f4 45%, #d0d0d0); display: flex; align-items: center; justify-content: center; gap: 1px; }
.hthumb i { width: 2px; height: 7px; background: #777; }
.lt, .rt { border: 3px solid transparent; border-right: 4px solid #404040; border-left: 0; }
.rt { border-left: 4px solid #404040; border-right: 0; }
.hstub { width: 3px; background: #000; }

.status { flex: none; height: 21px; display: flex; gap: 4px; padding: 3px 4px 0 5px; border-top: 1px solid #fff; }
.status > span { border: 1px solid #a0a0a0; border-bottom: 0; padding: 0 4px; white-space: nowrap; line-height: 16px; }
.status .s1 { flex: 321 1 0; }
.status .s2 { flex: 352 1 0; }
.s3 { width: 50px; }
.status .s4 { width: 43px; padding: 0; text-align: center; }
.s5 { width: 27px; }
.s6 { width: 25px; }
.status .s7 { flex: 320 1 0; text-align: center; }
.status .s8 { width: 149px; display: flex; align-items: center; gap: 4px; }
.s8 svg { width: 12px; height: 12px; }
.s8 input { flex: 1; min-width: 0; height: 14px; appearance: none; background: linear-gradient(#888, #888) center / 100% 1px no-repeat; }
.s8 input::-webkit-slider-thumb { appearance: none; width: 9px; height: 9px; border-radius: 50%; background: #4f7fa5; border: 1px solid #294b68; }
.status .s9 { width: 38px; padding: 0; text-align: center; }
</style>
